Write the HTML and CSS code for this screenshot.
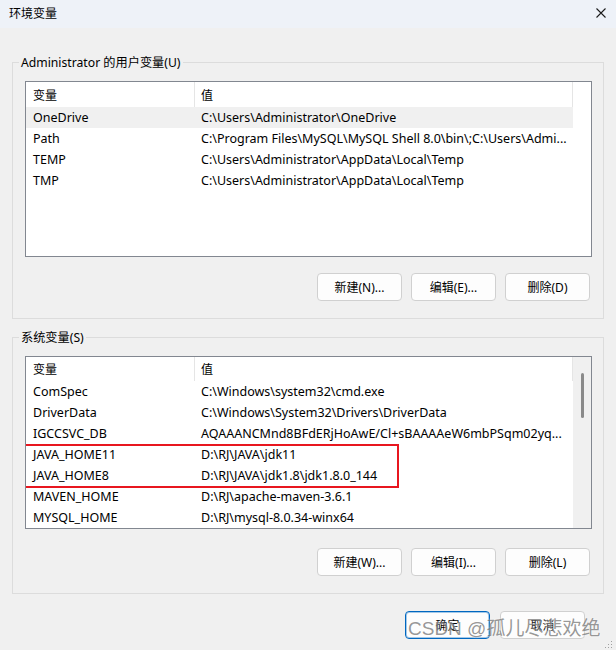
FILE: index.html
```html
<!DOCTYPE html>
<html lang="zh-CN">
<head>
    <meta charset="UTF-8">
    <title>环境变量</title>
    <link rel="stylesheet" href="styles.css">
</head>
<body>
    <div class="titlebar">
        <span class="title">环境变量</span>
        <svg class="close" width="10" height="10" viewBox="0 0 10 10">
            <path d="M0.5 0.5 L9.5 9.5 M9.5 0.5 L0.5 9.5" stroke="#1b1b1b" stroke-width="1.1" fill="none"/>
        </svg>
    </div>

    <div class="content">
        <fieldset class="group">
            <legend>Administrator 的用户变量(U)</legend>
            <div class="list">
                <div class="list-main">
                    <div class="row head"><span>变量</span><span>值</span></div>
                    <div class="row active"><span>OneDrive</span><span>C:\Users\Administrator\OneDrive</span></div>
                    <div class="row"><span>Path</span><span>C:\Program Files\MySQL\MySQL Shell 8.0\bin\;C:\Users\Admi...</span></div>
                    <div class="row"><span>TEMP</span><span>C:\Users\Administrator\AppData\Local\Temp</span></div>
                    <div class="row"><span>TMP</span><span>C:\Users\Administrator\AppData\Local\Temp</span></div>
                </div>
                <div class="gutter"></div>
            </div>
            <div class="actions">
                <button>新建(N)...</button>
                <button>编辑(E)...</button>
                <button>删除(D)</button>
            </div>
        </fieldset>

        <fieldset class="group group-sys">
            <legend>系统变量(S)</legend>
            <div class="list list-sys">
                <div class="list-main">
                    <div class="row head"><span>变量</span><span>值</span></div>
                    <div class="row"><span>ComSpec</span><span>C:\Windows\system32\cmd.exe</span></div>
                    <div class="row"><span>DriverData</span><span>C:\Windows\System32\Drivers\DriverData</span></div>
                    <div class="row"><span>IGCCSVC_DB</span><span>AQAAANCMnd8BFdERjHoAwE/Cl+sBAAAAeW6mbPSqm02yq...</span></div>
                    <div class="mark">
                        <div class="row"><span>JAVA_HOME11</span><span>D:\RJ\JAVA\jdk11</span></div>
                        <div class="row"><span>JAVA_HOME8</span><span>D:\RJ\JAVA\jdk1.8\jdk1.8.0_144</span></div>
                    </div>
                    <div class="row"><span>MAVEN_HOME</span><span>D:\RJ\apache-maven-3.6.1</span></div>
                    <div class="row"><span>MYSQL_HOME</span><span>D:\RJ\mysql-8.0.34-winx64</span></div>
                </div>
                <div class="gutter scroll"><div class="thumb"></div></div>
            </div>
            <div class="actions">
                <button>新建(W)...</button>
                <button>编辑(I)...</button>
                <button>删除(L)</button>
            </div>
        </fieldset>
    </div>

    <div class="footer">
        <button class="primary">确定</button>
        <button>取消</button>
    </div>

    <span class="watermark">CSDN @孤儿尽悲欢绝</span>
    <svg class="grip" width="8" height="8" viewBox="0 0 8 8">
        <rect x="6" y="0" width="1" height="1" fill="#a0a0a0"/>
        <rect x="3" y="3" width="1" height="1" fill="#a0a0a0"/>
        <rect x="6" y="3" width="1" height="1" fill="#a0a0a0"/>
        <rect x="0" y="6" width="1" height="1" fill="#a0a0a0"/>
        <rect x="3" y="6" width="1" height="1" fill="#a0a0a0"/>
        <rect x="6" y="6" width="1" height="1" fill="#a0a0a0"/>
    </svg>
</body>
</html>
```

FILE: styles.css
```css
* {
    box-sizing: border-box;
}
body {
    margin: 0;
    width: 616px;
    height: 650px;
    overflow: hidden;
    position: relative;
    background: #f0f0f0;
    font-family: 'Noto Sans', 'Noto Sans CJK SC', sans-serif;
    font-size: 12px;
    color: #000;
}
.titlebar {
    height: 28px;
    background: #eef2f8;
    display: flex;
    align-items: center;
    justify-content: space-between;
    padding: 0 10px 2px 9px;
}
.close {
    display: block;
}
.content {
    padding: 26px 12px 0 12px;
}
.group {
    margin: 0;
    min-width: 0;
    border: 1px solid #dcdcdc;
    padding: 10px 11px 17px 12px;
}
.group-sys {
    margin-top: 10px;
}
.group legend {
    padding: 0 2px;
    margin-left: -6px;
    line-height: 17px;
    font-size: 12.2px;
}
.list {
    display: flex;
    height: 176px;
    background: #fff;
    border: 1px solid #828790;
}
.list-sys {
    height: 173px;
}
.list-main {
    flex: 1;
    min-width: 0;
    overflow: hidden;
}
.gutter {
    width: 18px;
}
.scroll {
    background: #f0f0f0;
}
.thumb {
    width: 3px;
    height: 45px;
    margin: 16px 0 0 8px;
    border-radius: 2px;
    background: #8a8a8a;
}
.row {
    display: grid;
    grid-template-columns: 169px 1fr;
    align-items: center;
    height: 21px;
    font-size: 12.5px;
}
.row span {
    white-space: nowrap;
    overflow: hidden;
    padding-left: 7px;
}
.row span + span {
    padding-left: 6px;
}
.row.head {
    height: 25px;
    align-items: stretch;
    font-size: 12px;
}
.list-sys .row.head {
    height: 24px;
}
.row.head span {
    display: flex;
    align-items: center;
    border-right: 1px solid #e5e5e5;
}
.row.active {
    background: #f0f0f0;
}
.mark {
    position: relative;
}
.mark::after {
    content: '';
    position: absolute;
    left: -2px;
    top: 0;
    width: 371px;
    bottom: -2px;
    border: 2px solid #e8161f;
}
.actions {
    display: flex;
    justify-content: flex-end;
    gap: 9px;
    margin-top: 16px;
    padding-right: 2px;
}
.group-sys .actions {
    margin-top: 19px;
}
button {
    width: 85px;
    height: 28px;
    padding: 0;
    border: 1px solid #d0d0d0;
    border-radius: 4px;
    background: #fdfdfd;
    font-family: inherit;
    font-size: 12px;
    color: #000;
}
.footer {
    display: flex;
    justify-content: flex-end;
    gap: 10px;
    padding: 17px 31px 0 0;
}
.primary {
    border-color: #0067c0;
    box-shadow: inset 0 0 0 1px rgba(0, 103, 192, 0.35);
}
.watermark {
    position: absolute;
    left: 408px;
    top: 619px;
    font-family: 'Liberation Sans', 'Noto Sans CJK SC', sans-serif;
    font-size: 19px;
    line-height: 20px;
    color: rgba(85, 85, 85, 0.62);
    text-shadow: 0 0 2px rgba(255, 255, 255, 0.8);
    white-space: nowrap;
}
.grip {
    position: absolute;
    right: 3px;
    bottom: 1px;
}
```
